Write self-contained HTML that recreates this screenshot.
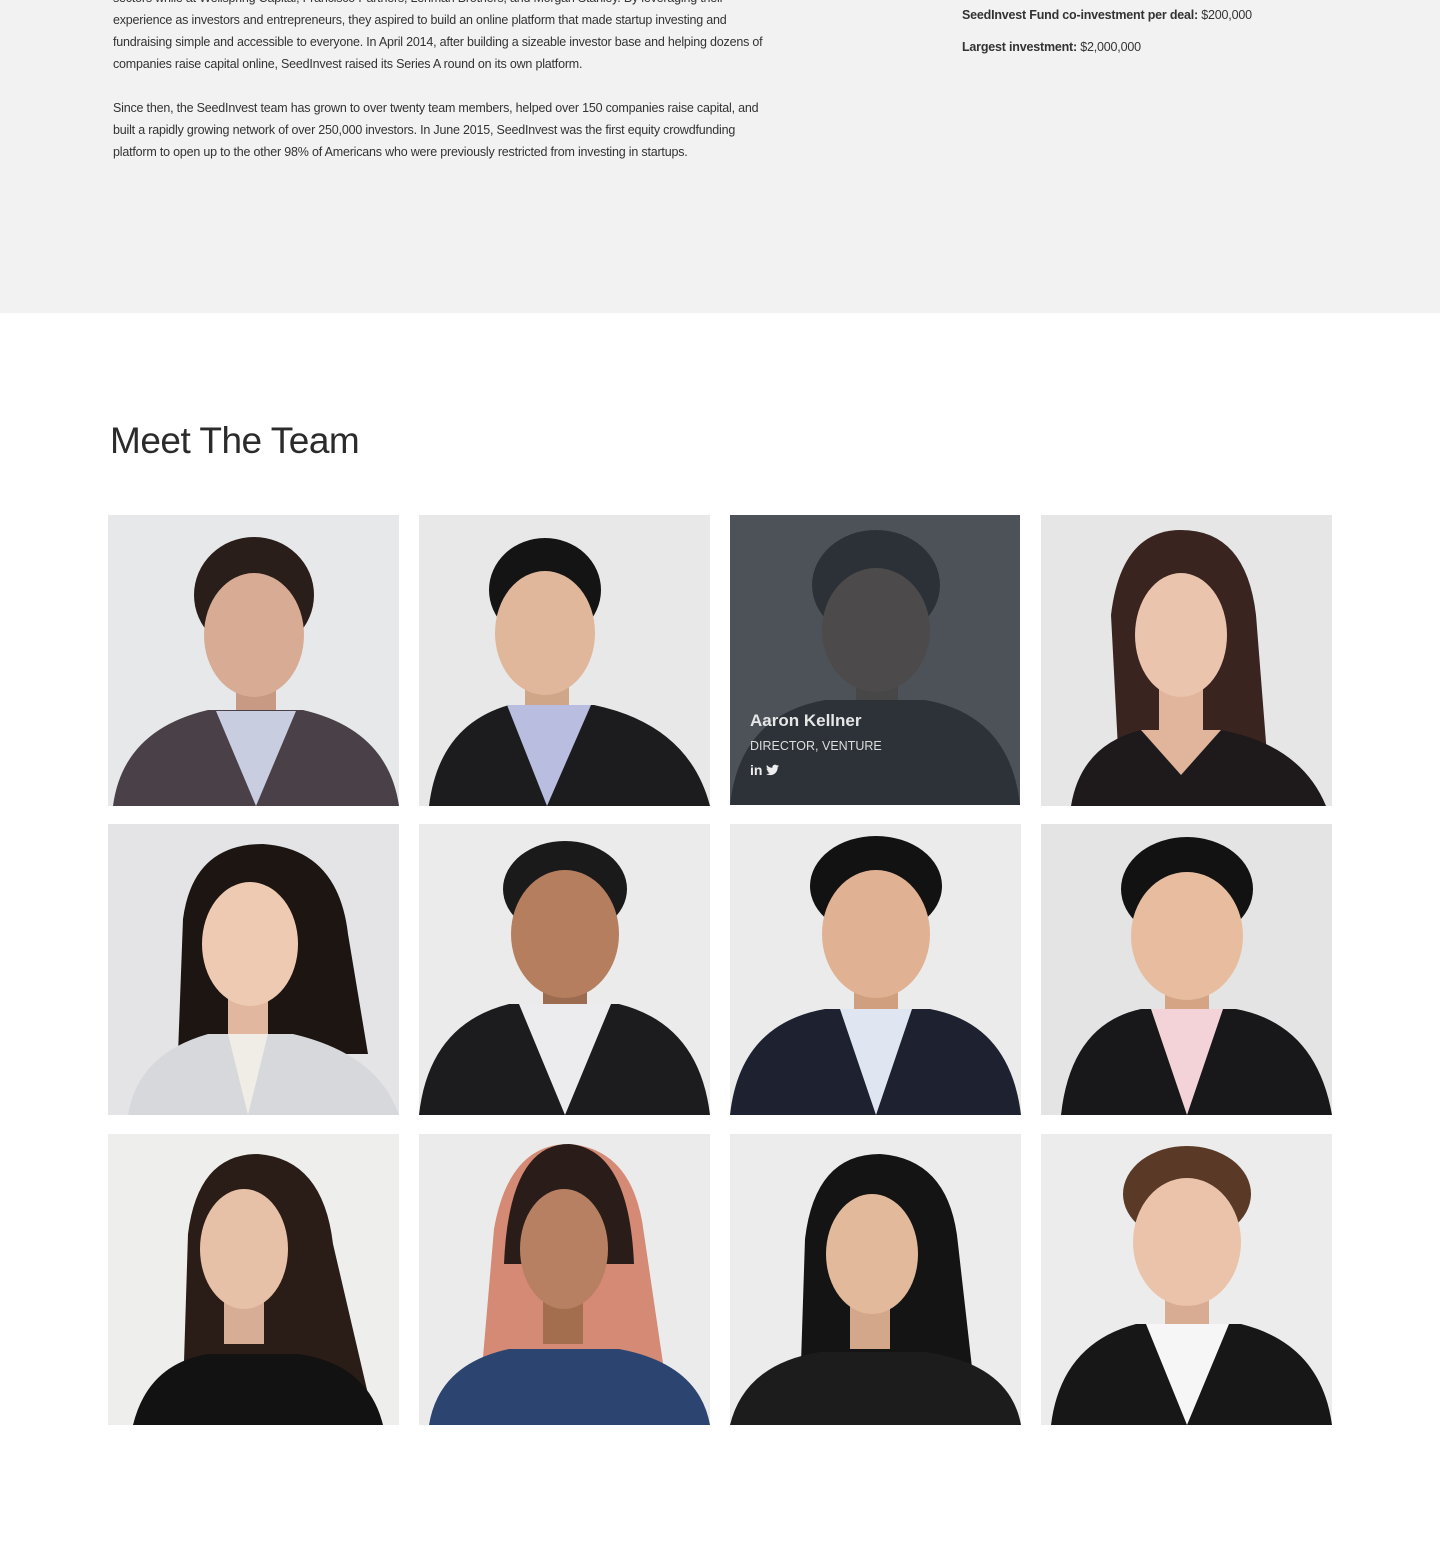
<!DOCTYPE html>
<html><head><meta charset="utf-8">
<style>
*{margin:0;padding:0;box-sizing:border-box}
body{width:1440px;height:1552px;background:#fff;font-family:"Liberation Sans",sans-serif;color:#333;overflow:hidden;position:relative}
.top{position:absolute;left:0;top:0;width:1440px;height:313px;background:#f2f2f2}
.p{position:absolute;left:113px;width:680px;font-size:12.5px;line-height:22px;color:#333;letter-spacing:-0.2px}
.r{position:absolute;left:962px;font-size:12.5px;color:#333;letter-spacing:-0.2px}
h2{position:absolute;left:110px;top:420px;font-size:37px;font-weight:normal;color:#2b2b2b;letter-spacing:-0.5px}
.c{position:absolute;width:291px;height:291px;overflow:hidden}
.c svg{display:block}
.ov{position:absolute;left:0;top:0;width:290px;height:290px;background:rgba(45,52,58,0.82)}
.ov .n{position:absolute;left:20px;top:196px;color:#e6e6e6;font-size:17px;font-weight:bold}
.ov .t{position:absolute;left:20px;top:224px;color:#ddd;font-size:12.5px}
.ov .i{position:absolute;left:20px;top:247px;color:#eee;font-size:14px;font-weight:bold}
</style></head><body>
<div class="top">
<div class="p" style="top:-13px">sectors while at Wellspring Capital, Francisco Partners, Lehman Brothers, and Morgan Stanley. By leveraging their<br>experience as investors and entrepreneurs, they aspired to build an online platform that made startup investing and<br>fundraising simple and accessible to everyone. In April 2014, after building a sizeable investor base and helping dozens of<br>companies raise capital online, SeedInvest raised its Series A round on its own platform.</div>
<div class="p" style="top:97px">Since then, the SeedInvest team has grown to over twenty team members, helped over 150 companies raise capital, and<br>built a rapidly growing network of over 250,000 investors. In June 2015, SeedInvest was the first equity crowdfunding<br>platform to open up to the other 98% of Americans who were previously restricted from investing in startups.</div>
<div class="r" style="top:8px"><b>SeedInvest Fund co-investment per deal:</b> $200,000</div>
<div class="r" style="top:40px"><b>Largest investment:</b> $2,000,000</div>
</div>
<h2>Meet The Team</h2>

<div class="c" style="left:108px;top:515px"><svg width="291" height="291"><rect width="291" height="291" fill="#e6e8ea"/><ellipse cx="146" cy="80" rx="60" ry="58" fill="#2a1e1a"/><rect x="128" y="160" width="40" height="50" fill="#c89a84"/><ellipse cx="146" cy="120" rx="50" ry="62" fill="#d8ab95"/><path d="M5 291 Q15 215 100 195 L195 195 Q280 215 291 291Z" fill="#4a4047"/><path d="M108 196 L148 291 L188 196Z" fill="#c8cee0"/></svg></div>
<div class="c" style="left:419px;top:515px"><svg width="291" height="291"><rect width="291" height="291" fill="#e8e8e8"/><ellipse cx="126" cy="75" rx="56" ry="52" fill="#141414"/><rect x="106" y="160" width="44" height="50" fill="#d0a689"/><ellipse cx="126" cy="118" rx="50" ry="62" fill="#e0b79b"/><path d="M10 291 Q20 210 90 190 L175 190 Q270 210 291 291Z" fill="#1c1c1f"/><path d="M88 190 L128 291 L172 190Z" fill="#b9bde0"/></svg></div>
<div class="c" style="left:730px;top:515px"><svg width="291" height="291"><rect width="291" height="291" fill="#fff"/><rect width="290" height="290" fill="#d8d8d8"/><ellipse cx="146" cy="70" rx="64" ry="55" fill="#222"/><rect x="126" y="150" width="42" height="50" fill="#c29a82"/><ellipse cx="146" cy="115" rx="54" ry="62" fill="#d6ad95"/><path d="M0 290 Q10 200 95 185 L195 185 Q280 200 290 290Z" fill="#2a2a2c"/></svg><div class="ov"><div class="n">Aaron Kellner</div><div class="t">DIRECTOR, VENTURE</div><div class="i">in <svg width="13" height="12" viewBox="0 0 24 20" style="display:inline;vertical-align:-1px"><path fill="#eee" d="M24 2.4a9.8 9.8 0 0 1-2.8.8A4.9 4.9 0 0 0 23.3.5a9.9 9.9 0 0 1-3.1 1.2A4.9 4.9 0 0 0 11.8 6 14 14 0 0 1 1.700.9a4.9 4.9 0 0 0 1.5 6.6 4.9 4.9 0 0 1-2.2-.6v.1a4.9 4.9 0 0 0 3.9 4.8 4.9 4.9 0 0 1-2.2.1 4.9 4.9 0 0 0 4.6 3.4A9.9 9.9 0 0 1 0 17.3 14 14 0 0 0 7.5 19.5c9 0 14-7.5 14-14v-.6A10 10 0 0 0 24 2.4z"/></svg></div></div></div>
<div class="c" style="left:1041px;top:515px"><svg width="291" height="291"><rect width="291" height="291" fill="#e6e6e6"/><path d="M80 291 L70 100 Q80 15 140 15 Q205 15 215 100 L230 291Z" fill="#3a2420"/><rect x="118" y="165" width="44" height="60" fill="#e0b59c"/><ellipse cx="140" cy="120" rx="46" ry="62" fill="#eac4ad"/><path d="M30 291 Q40 230 100 215 L180 215 Q260 230 285 291Z" fill="#1e1a1c"/><path d="M100 215 L140 260 L180 215Z" fill="#e0b59c"/></svg></div>

<div class="c" style="left:108px;top:824px"><svg width="291" height="291"><rect width="291" height="291" fill="#e4e4e6"/><path d="M70 230 L75 95 Q85 20 155 20 Q230 25 240 110 L260 230Z" fill="#1c1512"/><rect x="120" y="170" width="40" height="50" fill="#e1b79f"/><ellipse cx="142" cy="120" rx="48" ry="62" fill="#efcab3"/><path d="M20 291 Q30 230 100 210 L185 210 Q270 230 291 291Z" fill="#d6d8dc"/><path d="M120 210 L140 291 L160 210Z" fill="#f0ece6"/></svg></div>
<div class="c" style="left:419px;top:824px"><svg width="291" height="291"><rect width="291" height="291" fill="#ebebeb"/><ellipse cx="146" cy="65" rx="62" ry="48" fill="#1a1a1a"/><rect x="124" y="150" width="44" height="50" fill="#9c6c50"/><ellipse cx="146" cy="110" rx="54" ry="64" fill="#b47e5f"/><path d="M0 291 Q10 200 90 180 L200 180 Q280 200 291 291Z" fill="#1c1c1e"/><path d="M100 180 L146 291 L192 180Z" fill="#ececee"/></svg></div>
<div class="c" style="left:730px;top:824px"><svg width="291" height="291"><rect width="291" height="291" fill="#ebebeb"/><ellipse cx="146" cy="62" rx="66" ry="50" fill="#121212"/><rect x="124" y="150" width="44" height="50" fill="#cf9f80"/><ellipse cx="146" cy="110" rx="54" ry="64" fill="#e0b193"/><path d="M0 291 Q10 200 95 185 L200 185 Q280 200 291 291Z" fill="#1e2230"/><path d="M110 185 L146 291 L182 185Z" fill="#dfe6f2"/></svg></div>
<div class="c" style="left:1041px;top:824px"><svg width="291" height="291"><rect width="291" height="291" fill="#e4e4e4"/><ellipse cx="146" cy="65" rx="66" ry="52" fill="#121212"/><rect x="124" y="150" width="44" height="50" fill="#d4a484"/><ellipse cx="146" cy="112" rx="56" ry="64" fill="#e8bd9f"/><path d="M20 291 Q30 200 100 185 L195 185 Q275 200 291 291Z" fill="#18181a"/><path d="M110 185 L146 291 L182 185Z" fill="#f3d3d8"/></svg></div>

<div class="c" style="left:108px;top:1134px"><svg width="291" height="291"><rect width="291" height="291" fill="#eeeeec"/><path d="M75 260 L80 100 Q90 20 150 20 Q215 25 225 110 L260 260Z" fill="#2a1c16"/><rect x="116" y="160" width="40" height="50" fill="#d7ad95"/><ellipse cx="136" cy="115" rx="44" ry="60" fill="#e7c0a8"/><path d="M25 291 Q40 230 100 220 L190 220 Q260 230 275 291Z" fill="#121212"/></svg></div>
<div class="c" style="left:419px;top:1134px"><svg width="291" height="291"><rect width="291" height="291" fill="#ebebeb"/><path d="M60 270 L75 95 Q90 10 150 10 Q215 15 225 100 L250 270Z" fill="#d48a75"/><path d="M85 130 Q90 10 150 10 Q210 15 215 130Z" fill="#2a1c18"/><rect x="124" y="160" width="40" height="50" fill="#a26e4e"/><ellipse cx="145" cy="115" rx="44" ry="60" fill="#b88062"/><path d="M10 291 Q20 230 90 215 L200 215 Q280 230 291 291Z" fill="#2c4470"/></svg></div>
<div class="c" style="left:730px;top:1134px"><svg width="291" height="291"><rect width="291" height="291" fill="#ececec"/><path d="M70 260 L75 105 Q85 20 150 20 Q220 25 228 110 L245 260Z" fill="#141414"/><rect x="120" y="165" width="40" height="50" fill="#d3a88a"/><ellipse cx="142" cy="120" rx="46" ry="60" fill="#e3b99b"/><path d="M0 291 Q15 230 90 218 L195 218 Q280 230 291 291Z" fill="#1c1c1c"/></svg></div>
<div class="c" style="left:1041px;top:1134px"><svg width="291" height="291"><rect width="291" height="291" fill="#ececec"/><ellipse cx="146" cy="60" rx="64" ry="48" fill="#5a3a26"/><rect x="124" y="150" width="44" height="50" fill="#d8ac92"/><ellipse cx="146" cy="108" rx="54" ry="64" fill="#eac3aa"/><path d="M10 291 Q20 210 95 190 L200 190 Q280 210 291 291Z" fill="#171717"/><path d="M105 190 L146 291 L188 190Z" fill="#f6f6f6"/></svg></div>
</body></html>
